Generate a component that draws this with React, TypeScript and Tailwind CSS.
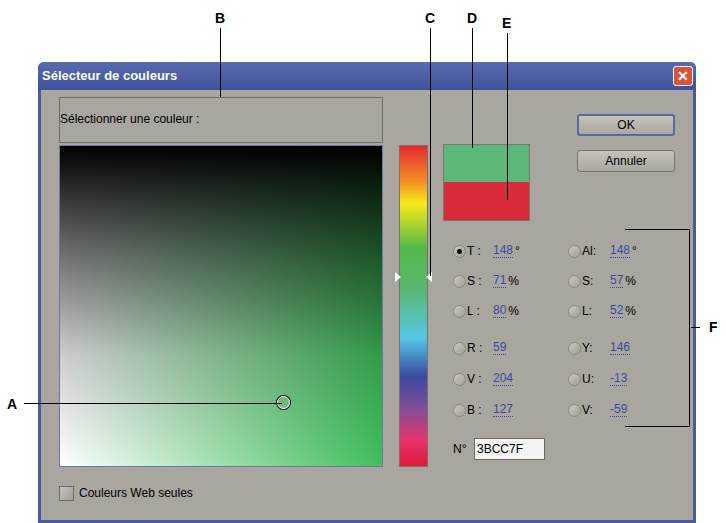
const font = { fontFamily: '"Liberation Sans", Tahoma, sans-serif' };

function Radio({ on }: { on?: boolean }) {
  return (
    <span className="flex h-[13px] w-[13px] items-center justify-center rounded-full border border-[#8a8680] bg-gradient-to-br from-[#ccc8c2] to-[#a29e98]">
      {on && <span className="h-[5px] w-[5px] rounded-full bg-black" />}
    </span>
  );
}

function Field({ on, label, value, unit, wide }: { on?: boolean; label: string; value: string; unit?: string; wide?: boolean }) {
  return (
    <div className="flex h-[16px] items-center text-[12px] text-black">
      <Radio on={on} />
      <span className={wide ? "ml-[1px] w-[28px]" : "ml-[1px] w-[26px]"}>{label}</span>
      <span className="border-b border-dotted border-[#3b4aa0] leading-[13px] text-[#3b4aa0]">{value}</span>
      {unit && <span className="ml-[2px]">{unit}</span>}
    </div>
  );
}

export default function App() {
  return (
    <div className="relative h-[523px] w-[726px] overflow-hidden bg-white" style={font}>
      <div className="ml-[38px] mt-[62px] flex h-[461px] w-[658px] flex-col rounded-t-[6px] border-x-[3px] border-b-[3px] border-[#4a5b9b] bg-[#a9a59f]">
        <div className="-mx-[3px] flex h-[28px] items-center justify-between rounded-t-[6px] bg-gradient-to-b from-[#5a6cb0] to-[#3f519a] pl-[4px] pr-[3px]">
          <span className="text-[13px] font-bold text-white">Sélecteur de couleurs</span>
          <span className="flex h-[20px] w-[20px] items-center justify-center rounded-[3px] border border-white bg-[#d8553a] text-[14px] font-bold text-white">✕</span>
        </div>
        <div className="flex pl-[18px] pt-[7px]">
          <div className="flex w-[324px] flex-col">
            <div className="flex h-[46px] items-center border border-[#6e6a65] pb-[3px] text-[12px] text-black">Sélectionner une couleur :</div>
            <div className="relative mt-[2px] h-[322px] border border-[#6d7aa8]"
              style={{ background: "linear-gradient(to bottom, #000 0%, rgba(0,0,0,0.55) 35%, rgba(0,0,0,0.2) 65%, rgba(0,0,0,0) 100%), linear-gradient(to right, #ffffff, #3fc05c)" }}>
              <span className="absolute left-[217px] top-[250px] h-[13px] w-[13px] rounded-full border-[1.5px] border-white ring-1 ring-black" />
            </div>
            <div className="mt-[17px] flex items-center gap-[5px] text-[12px] text-black">
              <span className="h-[15px] w-[15px] border border-[#6e6a65] bg-gradient-to-br from-[#c8c4be] to-[#a09c96]" />
              Couleurs Web seules
            </div>
          </div>
          <div className="relative ml-[16px] mt-[48px] h-[322px] w-[29px] border border-[#7a6e70]"
            style={{ background: "linear-gradient(to bottom, #e5282e 0%, #f39a22 12%, #f7ea1a 18%, #52b848 32%, #58b872 45%, #55c8e8 60%, #3a4aa0 72%, #8a4c96 83%, #e8326c 92%, #e01a3a 100%)" }}>
            <span className="absolute -left-[5px] top-[126px] h-0 w-0 border-y-[5px] border-l-[6px] border-y-transparent border-l-white" />
            <span className="absolute -right-[5px] top-[126px] h-0 w-0 border-y-[5px] border-r-[6px] border-y-transparent border-r-white" />
          </div>
          <div className="ml-[15px] mt-[47px] flex w-[110px] flex-col">
            <div className="flex h-[77px] w-[87px] flex-col border border-[#7a7670]">
              <div className="h-[37px] bg-[#5cb878]" />
              <div className="flex-1 bg-[#d92a3a]" />
            </div>
            <div className="mt-[22px] flex flex-col pl-[10px]">
              <div className="grid grid-cols-[115px_80px] gap-y-[14px]">
                <Field on label="T :" value="148" unit="°" />
                <Field label="Al:" value="148" unit="°" wide />
                <Field label="S :" value="71" unit="%" />
                <Field label="S:" value="57" unit="%" wide />
                <Field label="L :" value="80" unit="%" />
                <Field label="L:" value="52" unit="%" wide />
              </div>
              <div className="mt-[21px] grid grid-cols-[115px_80px] gap-y-[15px]">
                <Field label="R :" value="59" />
                <Field label="Y:" value="146" wide />
                <Field label="V :" value="204" />
                <Field label="U:" value="-13" wide />
                <Field label="B :" value="127" />
                <Field label="V:" value="-59" wide />
              </div>
              <div className="mt-[20px] flex items-center text-[12px] text-black">
                <span className="w-[21px]">N°</span>
                <span className="flex h-[22px] w-[71px] items-center border border-[#6e6a65] bg-[#f4f4f2] pl-[2px]">3BCC7F</span>
              </div>
            </div>
          </div>
          <div className="ml-[24px] mt-[17px] flex flex-col gap-[14px]">
            <div className="flex h-[22px] w-[98px] items-center justify-center rounded-[3px] border-2 border-[#5a6aa0] bg-gradient-to-b from-[#c6c2bc] to-[#aaa6a0] text-[12px] text-black">OK</div>
            <div className="flex h-[22px] w-[98px] items-center justify-center rounded-[3px] border border-[#77736d] bg-gradient-to-b from-[#c6c2bc] to-[#aaa6a0] text-[12px] text-black">Annuler</div>
          </div>
        </div>
      </div>

      {/* callouts */}
      <span className="absolute left-[215px] top-[8px] text-[14px] font-bold text-black">B</span>
      <span className="absolute left-[220px] top-[28px] h-[69px] w-px bg-black" />
      <span className="absolute left-[425px] top-[8px] text-[14px] font-bold text-black">C</span>
      <span className="absolute left-[430px] top-[28px] h-[248px] w-px bg-black" />
      <span className="absolute left-[467px] top-[8px] text-[14px] font-bold text-black">D</span>
      <span className="absolute left-[472px] top-[28px] h-[120px] w-px bg-black" />
      <span className="absolute left-[502px] top-[13px] text-[14px] font-bold text-black">E</span>
      <span className="absolute left-[507px] top-[33px] h-[167px] w-px bg-black" />
      <span className="absolute left-[7px] top-[394px] text-[14px] font-bold text-black">A</span>
      <span className="absolute left-[24px] top-[403px] h-px w-[258px] bg-black" />
      <span className="absolute left-[625px] top-[229px] h-[198px] w-[65px] border-y border-r border-black" />
      <span className="absolute left-[691px] top-[327px] h-px w-[9px] bg-black" />
      <span className="absolute left-[709px] top-[317px] text-[14px] font-bold text-black">F</span>
    </div>
  );
}
